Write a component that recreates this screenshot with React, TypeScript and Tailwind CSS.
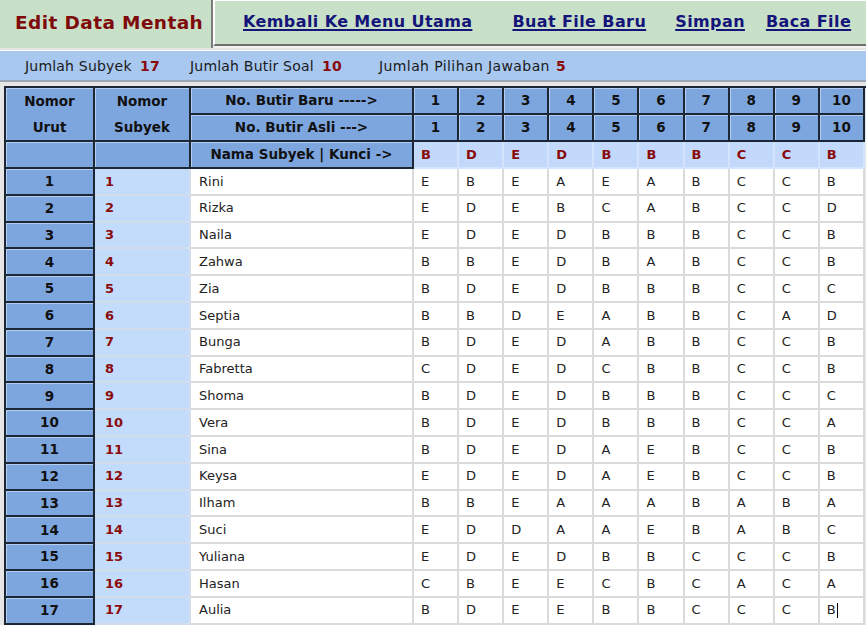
import React from "react";

type Row = { name: string; ans: string };

const KEY = "BDEDBBBCCB";

const ROWS: Row[] = [
  { name: "Rini", ans: "EBEAEABCCB" },
  { name: "Rizka", ans: "EDEBCABCCD" },
  { name: "Naila", ans: "EDEDBBBCCB" },
  { name: "Zahwa", ans: "BBEDBABCCB" },
  { name: "Zia", ans: "BDEDBBBCCC" },
  { name: "Septia", ans: "BBDEABBCAD" },
  { name: "Bunga", ans: "BDEDABBCCB" },
  { name: "Fabretta", ans: "CDEDCBBCCB" },
  { name: "Shoma", ans: "BDEDBBBCCC" },
  { name: "Vera", ans: "BDEDBBBCCA" },
  { name: "Sina", ans: "BDEDAEBCCB" },
  { name: "Keysa", ans: "EDEDAEBCCB" },
  { name: "Ilham", ans: "BBEAAABABA" },
  { name: "Suci", ans: "EDDAAEBABC" },
  { name: "Yuliana", ans: "EDEDBBCCCB" },
  { name: "Hasan", ans: "CBEECBCACA" },
  { name: "Aulia", ans: "BDEEBBCCCB" },
];

const NUMS = [1, 2, 3, 4, 5, 6, 7, 8, 9, 10];

const head =
  "bg-[#7ea6de] border-r-2 border-b-2 border-[#1c2634] shadow-[inset_1px_1px_0_#b4cdf0] flex items-center justify-center font-bold text-[13.5px] text-[#111]";

const white =
  "bg-white border-r-2 border-b-2 border-[#dadada] flex items-center text-[13px] text-[#222]";

function NavLink({ children }: { children: React.ReactNode }) {
  return (
    <span className="text-[#14147a] font-bold text-[16px] tracking-[0.4px] underline underline-offset-2 decoration-[1.5px]">
      {children}
    </span>
  );
}

export default function App() {
  return (
    <div className="w-[866px] h-[625px] overflow-hidden bg-[#e6e6e6] font-['DejaVu_Sans',sans-serif] select-none">
      {/* title + navigation strip */}
      <div className="flex h-[48px] bg-[#f2f2f2]">
        <div className="w-[213px] h-[48px] bg-[#c8e0c8] border-r-2 border-[#7c7c7c] flex items-center pl-[15px] pb-[2px]">
          <span className="text-[18.5px] font-bold text-[#7e0a0a] tracking-[0.4px]">Edit Data Mentah</span>
        </div>
        <div className="flex-1 h-[46px] bg-[#c8e0c8] border-l-2 border-t border-white border-b-2 border-b-[#6e6e6e] flex items-center pl-[28px] pb-[1px]">
          <NavLink>Kembali Ke Menu Utama</NavLink>
          <div className="w-[40px]" />
          <NavLink>Buat File Baru</NavLink>
          <div className="w-[29px]" />
          <NavLink>Simpan</NavLink>
          <div className="w-[21px]" />
          <NavLink>Baca File</NavLink>
        </div>
      </div>

      {/* summary bar */}
      <div className="mt-[2px] h-[32px] bg-[#a8c8f0] border-t border-white border-b-2 border-b-[#9aa8b8] flex items-center pl-[25px] pt-[1px] text-[14px]">
        <div className="w-[165px] flex items-center">
          <span className="w-[115px] tracking-[0.2px] text-[#1a1a1a]">Jumlah Subyek</span>
          <span className="font-bold text-[#8a0b0b] tracking-[0.3px]">17</span>
        </div>
        <div className="w-[189px] flex items-center">
          <span className="w-[132px] tracking-[0.2px] text-[#1a1a1a]">Jumlah Butir Soal</span>
          <span className="font-bold text-[#8a0b0b] tracking-[0.3px]">10</span>
        </div>
        <div className="flex items-center">
          <span className="w-[177px] tracking-[0.4px] text-[#1a1a1a]">Jumlah Pilihan Jawaban</span>
          <span className="font-bold text-[#8a0b0b]">5</span>
        </div>
      </div>

      {/* answer grid */}
      <div className="mt-[4px] ml-[4px] grid grid-cols-[89px_96px_223px_repeat(10,45.1px)] grid-rows-[27px_27px_27px_repeat(17,26.8px)] border-l-2 border-t-2 border-[#1c2634]">
        <div className={`${head} row-span-2 flex-col`}>
          <div className="h-[26px] flex items-center">Nomor</div>
          <div className="h-[26px] flex items-center">Urut</div>
        </div>
        <div className={`${head} row-span-2 flex-col`}>
          <div className="h-[26px] flex items-center">Nomor</div>
          <div className="h-[26px] flex items-center">Subyek</div>
        </div>
        <div className={head}>No. Butir Baru -----&gt;</div>
        {NUMS.map((n) => (
          <div key={`b${n}`} className={head}>
            {n}
          </div>
        ))}
        <div className={head}>No. Butir Asli ---&gt;</div>
        {NUMS.map((n) => (
          <div key={`a${n}`} className={head}>
            {n}
          </div>
        ))}
        <div className={head} />
        <div className={head} />
        <div className={head}>Nama Subyek | Kunci -&gt;</div>
        {KEY.split("").map((k, i) => (
          <div
            key={`k${i}`}
            className="bg-[#c2d9fc] border-r-2 border-b-2 border-[#d4e4fc] flex items-center pl-[7px] font-bold text-[13px] text-[#8a0b0b]"
          >
            {k}
          </div>
        ))}

        {ROWS.map((r, i) => (
          <React.Fragment key={r.name}>
            <div className={head}>{i + 1}</div>
            <div className="bg-[#c4dcfc] border-r-2 border-b-2 border-[#d2dcea] flex items-center pl-[10px] font-bold text-[13px] text-[#8a0b0b]">
              {i + 1}
            </div>
            <div className={`${white} pl-[8px]`}>{r.name}</div>
            {r.ans.split("").map((a, j) => (
              <div key={j} className={`${white} pl-[7px]`}>
                {a}
                {i === ROWS.length - 1 && j === 9 ? (
                  <span className="ml-[1px] w-px h-[15px] bg-black" />
                ) : null}
              </div>
            ))}
          </React.Fragment>
        ))}
      </div>
    </div>
  );
}
